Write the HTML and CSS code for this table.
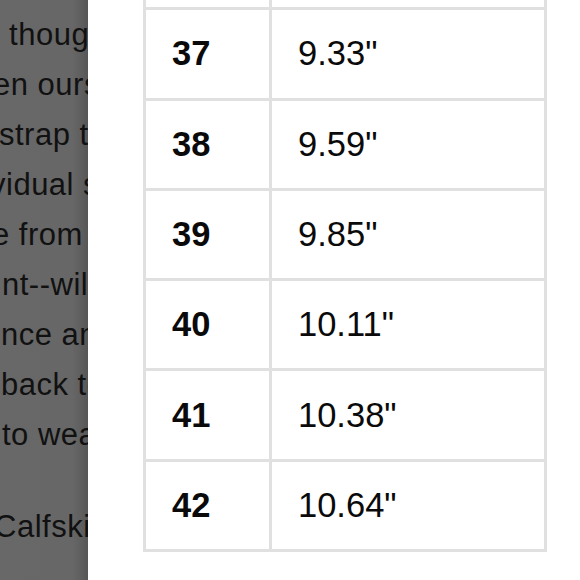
FILE: index.html
```html
<!DOCTYPE html>
<html lang="en">
<head>
<meta charset="utf-8">
<title>Size chart</title>
<link rel="stylesheet" href="styles.css">
</head>
<body>
<div class="screen">
  <div class="page-behind">
    <div class="copy">
      <div class="para">
        <div class="line"> though it</div>
        <div class="line shift-7">en ourselves</div>
        <div class="line shift-1">strap to</div>
        <div class="line shift-10">vidual style</div>
        <div class="line shift-8">e from the</div>
        <div class="line shift-p2">nt--will</div>
        <div class="line shift-p1">nce among</div>
        <div class="line shift-p1">back to</div>
        <div class="line shift-p2">to wear</div>
      </div>
      <div class="para">
        <div class="line shift-6">Calfskin</div>
      </div>
    </div>
  </div>
  <div class="panel">
    <div class="chart">
      <div class="cell size">36</div><div class="cell len">9.07"</div>
      <div class="cell size">37</div><div class="cell len">9.33"</div>
      <div class="cell size">38</div><div class="cell len">9.59"</div>
      <div class="cell size">39</div><div class="cell len">9.85"</div>
      <div class="cell size">40</div><div class="cell len">10.11"</div>
      <div class="cell size">41</div><div class="cell len">10.38"</div>
      <div class="cell size">42</div><div class="cell len">10.64"</div>
    </div>
  </div>
</div>
</body>
</html>
```

FILE: styles.css
```css
html, body {
  margin: 0;
  padding: 0;
  height: 100%;
  background: #ffffff;
}

.screen {
  display: flex;
  width: 580px;
  height: 580px;
  overflow: hidden;
  font-family: "Liberation Sans", Arial, sans-serif;
}

.page-behind {
  width: 88px;
  flex: none;
  overflow: hidden;
  background: linear-gradient(to right, #686868 0, #676767 72px, #5e5e5e 82px, #565656 88px);
}

.copy {
  display: flex;
  flex-direction: column;
  gap: 42px;
  padding-top: 10px;
  color: #111111;
  font-size: 31px;
  letter-spacing: 0.5px;
  line-height: 50px;
}

.line {
  white-space: pre;
  height: 50px;
}

.shift-1 { text-indent: -1px; }
.shift-6 { text-indent: -6px; }
.shift-7 { text-indent: -7px; }
.shift-8 { text-indent: -8px; }
.shift-10 { text-indent: -10px; }
.shift-p1 { text-indent: 1px; }
.shift-p2 { text-indent: 2px; }

.panel {
  flex: 1;
  display: flex;
  flex-direction: column;
  justify-content: flex-end;
  overflow: hidden;
  padding: 0 0 28px 55px;
  background: #ffffff;
}

.chart {
  display: grid;
  grid-template-columns: 123px 272px;
  grid-auto-rows: 87.3px;
  gap: 3px;
  padding: 3px;
  width: max-content;
  background: #e0e0e0;
  flex: none;
}

.cell {
  background: #ffffff;
  display: flex;
  align-items: center;
  padding-left: 26px;
  font-size: 34.5px;
  color: #0a0a0a;
}

.size {
  font-weight: bold;
}
```
